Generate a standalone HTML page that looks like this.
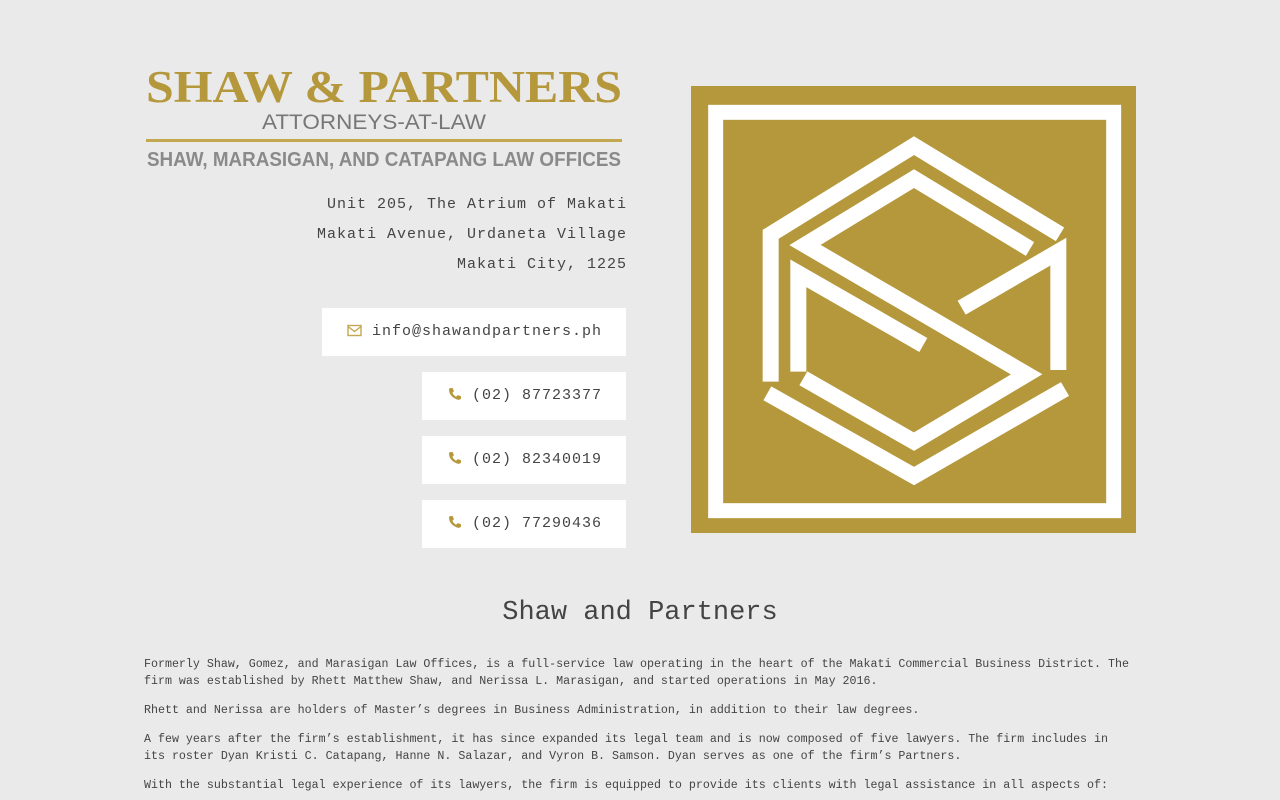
<!DOCTYPE html>
<html><head><meta charset="utf-8"><style>
html,body{margin:0;padding:0;overflow:hidden;height:800px}
body{width:1280px;height:800px;overflow:hidden;background:#eaeaea;font-family:"Liberation Mono",monospace;color:#444;position:relative}
.abs{position:absolute}
.addr{right:653px;text-align:right;font-size:15px;letter-spacing:1px;color:#444;white-space:nowrap}
.btn{position:absolute;right:654px;background:#fff;height:48px;line-height:48px;font-size:15px;letter-spacing:1px;color:#444;white-space:nowrap;box-sizing:border-box;padding-right:24px;text-align:right}
.btn svg{vertical-align:middle;margin-right:10px;position:relative;top:-1px}
h1{position:absolute;left:0;width:1280px;top:593px;margin:0;text-align:center;font-weight:normal;font-size:27px;line-height:40px;color:#444}
.txt{position:absolute;left:144px;top:656px;font-size:11.65px;line-height:17px;color:#444;white-space:nowrap}
.txt p{margin:0 0 12px}
</style></head><body>
<svg class="abs" style="left:140px;top:60px" width="490" height="115" viewBox="0 0 490 115">
<text x="6" y="42" textLength="476" lengthAdjust="spacingAndGlyphs" font-family="Liberation Serif" font-weight="bold" font-size="45" fill="#b5983c">SHAW &amp; PARTNERS</text>
<text x="122" y="69" textLength="224" lengthAdjust="spacingAndGlyphs" font-family="Liberation Sans" font-size="21" fill="#777">ATTORNEYS-AT-LAW</text>
<rect x="6" y="79" width="476" height="3" fill="#c4a84f"/>
<text x="7" y="106" textLength="474" lengthAdjust="spacingAndGlyphs" font-family="Liberation Sans" font-weight="bold" font-size="20" fill="#8a8a8a">SHAW, MARASIGAN, AND CATAPANG LAW OFFICES</text>
</svg>
<div class="abs addr" style="top:196px">Unit 205, The Atrium of Makati</div>
<div class="abs addr" style="top:226px">Makati Avenue, Urdaneta Village</div>
<div class="abs addr" style="top:256px">Makati City, 1225</div>
<div class="btn" style="top:308px;width:304px"><svg width="15" height="13" viewBox="0 0 15 13"><rect x="1" y="1.5" width="13" height="10" fill="none" stroke="#c4a84f" stroke-width="1.4"/><path d="M1 2.5 L7.5 7.5 L14 2.5" fill="none" stroke="#c4a84f" stroke-width="1.4"/></svg>info@shawandpartners.ph</div>
<div class="btn" style="top:372px;width:204px"><svg width="14" height="14" viewBox="0 0 13 13"><path d="M2 1 L4.5 1 L5.5 4 L4 5.5 Q6 8.5 7.5 9 L9 7.5 L12 8.5 L12 11 Q11 12 9.5 12 Q1 9 1 2.5 Q1 1 2 1Z" fill="#b5983c"/></svg>(02) 87723377</div>
<div class="btn" style="top:436px;width:204px"><svg width="14" height="14" viewBox="0 0 13 13"><path d="M2 1 L4.5 1 L5.5 4 L4 5.5 Q6 8.5 7.5 9 L9 7.5 L12 8.5 L12 11 Q11 12 9.5 12 Q1 9 1 2.5 Q1 1 2 1Z" fill="#b5983c"/></svg>(02) 82340019</div>
<div class="btn" style="top:500px;width:204px"><svg width="14" height="14" viewBox="0 0 13 13"><path d="M2 1 L4.5 1 L5.5 4 L4 5.5 Q6 8.5 7.5 9 L9 7.5 L12 8.5 L12 11 Q11 12 9.5 12 Q1 9 1 2.5 Q1 1 2 1Z" fill="#b5983c"/></svg>(02) 77290436</div>
<svg class="abs" style="left:690px;top:85px" width="447" height="449" viewBox="0 0 1341 1347">
<rect x="3" y="3" width="1335" height="1341" fill="#b5983c"/>
<rect x="77" y="82" width="1194" height="1195" fill="none" stroke="#fff" stroke-width="45"/>
<g fill="none" stroke="#fff" stroke-width="48" stroke-linejoin="miter" stroke-linecap="butt">
<polyline points="1110,448 672,182 242,448 242,890"/>
<polyline points="232,925 672,1173 1125,912"/>
<polyline points="1020,492 672,281 345,480 1010,868 672,1070 340,880"/>
<polyline points="325,860 325,565 700,780"/>
<polyline points="1105,855 1105,500 815,668"/>
</g>
</svg>
<h1>Shaw and Partners</h1>
<div class="txt">
<p>Formerly Shaw, Gomez, and Marasigan Law Offices, is a full-service law operating in the heart of the Makati Commercial Business District. The<br>firm was established by Rhett Matthew Shaw, and Nerissa L. Marasigan, and started operations in May 2016.</p>
<p>Rhett and Nerissa are holders of Master’s degrees in Business Administration, in addition to their law degrees.</p>
<p>A few years after the firm’s establishment, it has since expanded its legal team and is now composed of five lawyers. The firm includes in<br>its roster Dyan Kristi C. Catapang, Hanne N. Salazar, and Vyron B. Samson. Dyan serves as one of the firm’s Partners.</p>
<p>With the substantial legal experience of its lawyers, the firm is equipped to provide its clients with legal assistance in all aspects of:</p>
</div>
</body></html>
